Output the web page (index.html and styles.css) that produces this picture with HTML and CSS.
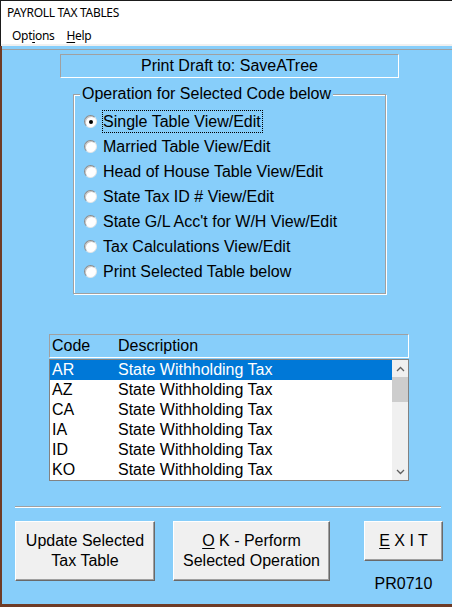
FILE: index.html
```html
<!DOCTYPE html>
<html>
<head>
<meta charset="utf-8">
<title>PAYROLL TAX TABLES</title>
<link rel="stylesheet" href="styles.css">
</head>
<body>
<div class="window">
  <div class="titlebar">PAYROLL TAX TABLES</div>
  <div class="menubar">
    <span class="menu m1">Opt<u>i</u>ons</span>
    <span class="menu m2"><u>H</u>elp</span>
  </div>
  <div class="strip"></div>
  <div class="client">
    <div class="edge"></div>
    <div class="draft">Print Draft to: SaveATree</div>
    <fieldset class="group">
      <legend>Operation for Selected Code below</legend>
      <div class="opt"><span class="radio on"></span><span class="lbl focus">Single Table View/Edit</span></div>
      <div class="opt"><span class="radio"></span><span class="lbl">Married Table View/Edit</span></div>
      <div class="opt"><span class="radio"></span><span class="lbl">Head of House Table View/Edit</span></div>
      <div class="opt"><span class="radio"></span><span class="lbl">State Tax ID # View/Edit</span></div>
      <div class="opt"><span class="radio"></span><span class="lbl">State G/L Acc't for W/H View/Edit</span></div>
      <div class="opt"><span class="radio"></span><span class="lbl">Tax Calculations View/Edit</span></div>
      <div class="opt"><span class="radio"></span><span class="lbl">Print Selected Table below</span></div>
    </fieldset>
    <div class="listhead"><span class="c1">Code</span><span class="c2">Description</span></div>
    <div class="list">
      <div class="rows">
        <div class="row sel"><span class="c1">AR</span><span class="c2">State Withholding Tax</span></div>
        <div class="row"><span class="c1">AZ</span><span class="c2">State Withholding Tax</span></div>
        <div class="row"><span class="c1">CA</span><span class="c2">State Withholding Tax</span></div>
        <div class="row"><span class="c1">IA</span><span class="c2">State Withholding Tax</span></div>
        <div class="row"><span class="c1">ID</span><span class="c2">State Withholding Tax</span></div>
        <div class="row"><span class="c1">KO</span><span class="c2">State Withholding Tax</span></div>
      </div>
      <div class="scroll">
        <div class="arrow"><svg width="9" height="6" viewBox="0 0 9 6"><path d="M1 5 L4.5 1.5 L8 5" fill="none" stroke="#606060" stroke-width="1.3"/></svg></div>
        <div class="thumb"></div>
        <div class="track"></div>
        <div class="arrow"><svg width="9" height="6" viewBox="0 0 9 6"><path d="M1 1 L4.5 4.5 L8 1" fill="none" stroke="#606060" stroke-width="1.3"/></svg></div>
      </div>
    </div>
    <div class="sep"></div>
    <div class="buttons">
      <button class="btn b1">Update Selected<br>Tax Table</button>
      <button class="btn b2"><u>O</u> K - Perform<br>Selected Operation</button>
      <div class="exitcol">
        <button class="btn b3"><u>E</u> X I T</button>
        <div class="prog">PR0710</div>
      </div>
    </div>
  </div>
</div>
</body>
</html>
```

FILE: styles.css
```css
* { box-sizing: border-box; }
html, body { margin: 0; padding: 0; }
body {
  width: 452px;
  height: 607px;
  overflow: hidden;
  background: #fff;
  font-family: "Liberation Sans", Arial, sans-serif;
  color: #000;
}
.window {
  height: 607px;
  display: flex;
  flex-direction: column;
  border-top: 1px solid #1b1b1b;
}
.titlebar {
  height: 26px;
  border-left: 1px solid #1b1b1b;
  padding-left: 6px;
  font-family: "Noto Sans", "Open Sans", sans-serif;
  font-size: 12px;
  letter-spacing: -0.3px;
  line-height: 24px;
}
.menubar {
  height: 17px;
  border-left: 1px solid #1b1b1b;
  display: flex;
  font-family: "Noto Sans", "Open Sans", sans-serif;
  font-size: 12px;
  letter-spacing: -0.3px;
  line-height: 17px;
}
.menu u { text-decoration: underline; text-underline-offset: 2px; }
.m1 { margin-left: 11px; }
.m2 { margin-left: 12px; }
.strip {
  height: 2px;
  background: #f0f0f0;
  border-left: 1px solid #1b1b1b;
}
.client {
  flex: 1;
  background: #87cefa;
  border-left: 2px solid #6e3b26;
  border-bottom: 3px solid #6e3b26;
  font-size: 16px;
}
.edge {
  margin-top: 3px;
  height: 1px;
  background: #a0a0a0;
}
.draft {
  margin: 4px 0 0 58px;
  width: 339px;
  height: 24px;
  border: 1px solid;
  border-color: #a0a0a0 #fff #fff #a0a0a0;
  text-align: center;
  line-height: 22px;
}
.group {
  margin: 7px 0 0 71px;
  width: 313px;
  padding: 6px 0 9px 0;
  border: 1px solid #a0a0a0;
  box-shadow: inset 1px 1px 0 #fff, 1px 1px 0 #fff;
}
.group legend {
  margin-left: 6px;
  padding: 0 2px;
  line-height: 18px;
  background: #87cefa;
}
.opt {
  height: 25px;
  display: flex;
  align-items: center;
}
.radio {
  width: 13px;
  height: 13px;
  margin-left: 10px;
  margin-right: 5px;
  border-radius: 50%;
  background: #fff;
  border: 1px solid;
  border-color: #8a8a8a #e6e6e6 #e6e6e6 #8a8a8a;
  box-shadow: inset 1px 1px 0 #c8c8c8;
  display: flex;
  align-items: center;
  justify-content: center;
  flex: none;
}
.radio.on::after {
  content: "";
  width: 4px;
  height: 4px;
  border-radius: 50%;
  background: #000;
}
.lbl {
  border: 1px dotted transparent;
  line-height: 21px;
  padding-right: 1px;
}
.lbl.focus { border-color: #000; }
.listhead {
  margin: 40px 0 0 47px;
  width: 360px;
  height: 24px;
  border: 1px solid;
  border-color: #a0a0a0 #fff #fff #a0a0a0;
  display: flex;
  line-height: 22px;
}
.c1 { width: 68px; padding-left: 2px; flex: none; }
.c2 { flex: none; }
.list {
  margin: 1px 0 0 47px;
  width: 360px;
  height: 122px;
  border: 1px solid #828282;
  background: #fff;
  display: flex;
}
.rows { flex: 1; }
.row {
  height: 20px;
  line-height: 20px;
  display: flex;
}
.row.sel { background: #0078d7; color: #fff; }
.scroll {
  width: 16px;
  background: #f0f0f0;
  display: flex;
  flex-direction: column;
}
.arrow {
  height: 17px;
  display: flex;
  align-items: center;
  justify-content: center;
}
.thumb { height: 25px; background: #cdcdcd; }
.track { flex: 1; }
.sep {
  margin: 25px 0 0 13px;
  width: 426px;
  height: 2px;
  border-top: 1px solid #a0a0a0;
  border-bottom: 1px solid #fff;
}
.buttons {
  margin: 13px 0 0 13px;
  display: flex;
  align-items: flex-start;
}
.btn {
  font-family: "Liberation Sans", Arial, sans-serif;
  font-size: 16px;
  line-height: 20px;
  color: #000;
  background: #f0f0f0;
  border: 1px solid;
  border-color: #fff #696969 #696969 #fff;
  box-shadow: inset -1px -1px 0 #a0a0a0;
  padding: 0;
  text-align: center;
}
.btn u { text-underline-offset: 2px; }
.b1 { width: 140px; height: 60px; }
.b2 { width: 157px; height: 60px; margin-left: 18px; }
.exitcol {
  margin-left: 34px;
  width: 79px;
  display: flex;
  flex-direction: column;
  align-items: center;
}
.b3 { width: 79px; height: 40px; }
.prog {
  margin-top: 13px;
  line-height: 20px;
}
```
